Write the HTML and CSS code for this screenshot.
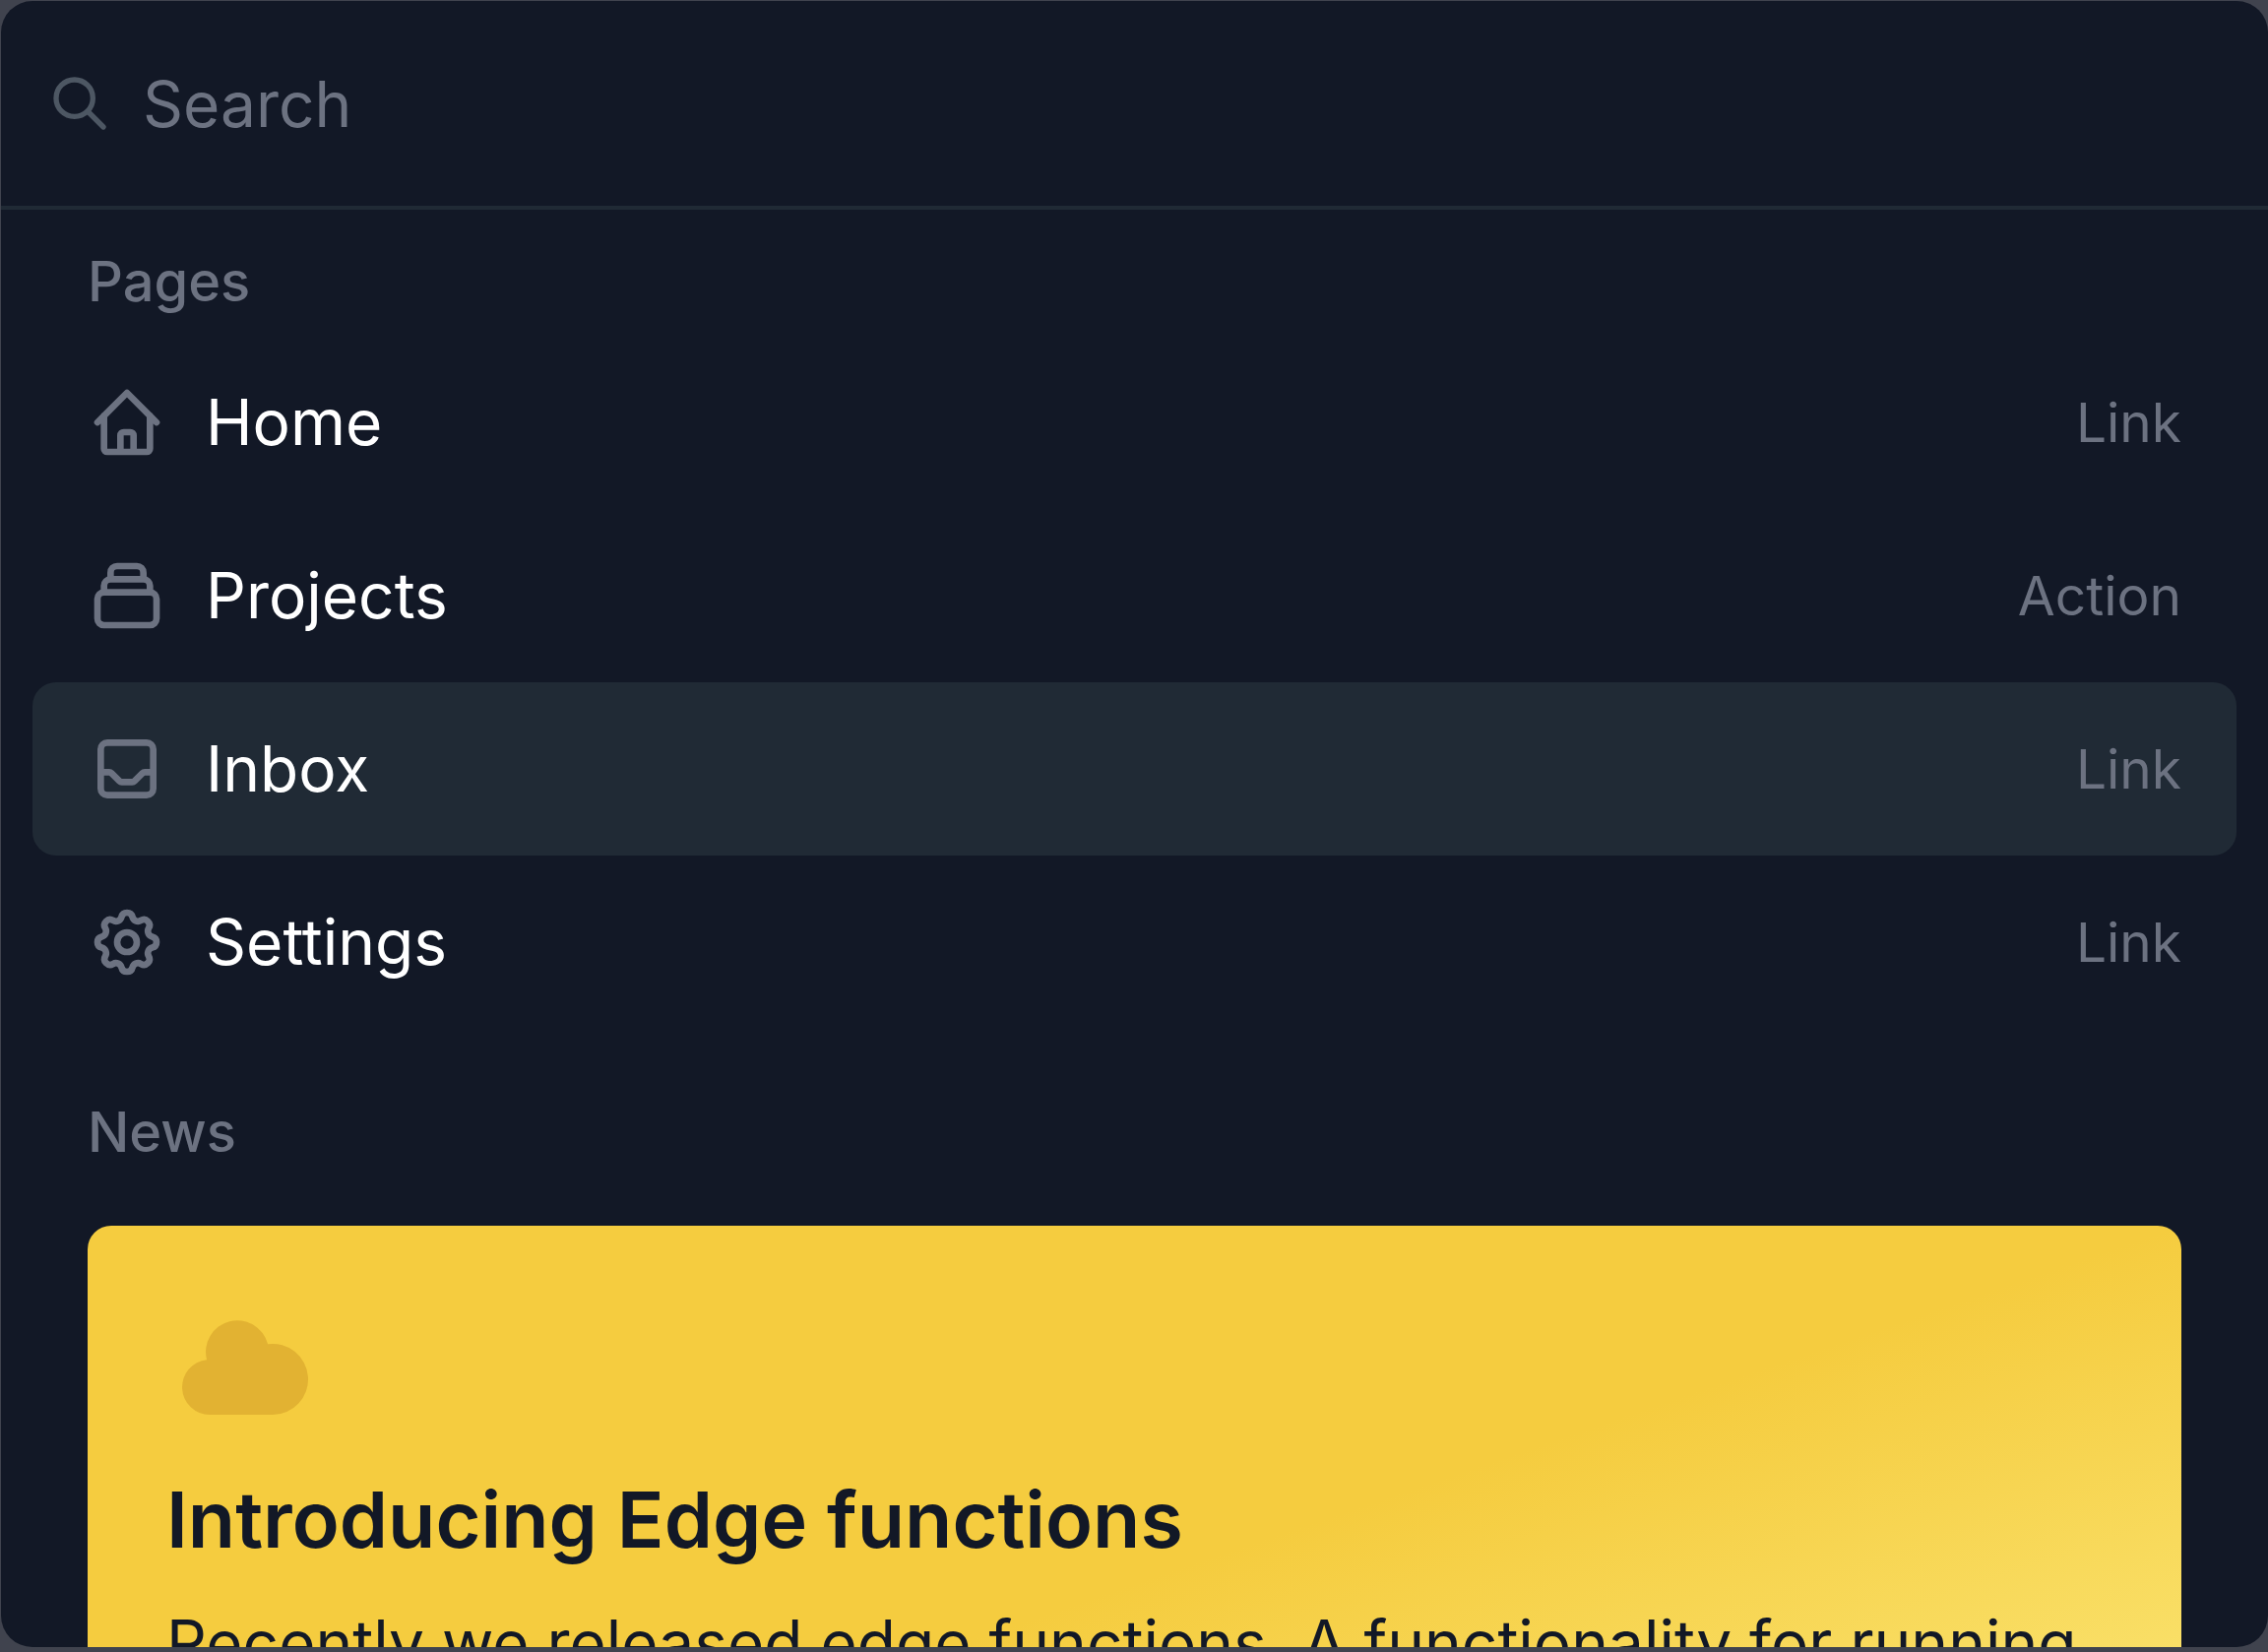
FILE: index.html
```html
<!DOCTYPE html>
<html lang="en">
<head>
  <meta charset="UTF-8">
  <meta name="viewport" content="width=device-width, initial-scale=1.0">
  <title>Command Palette</title>
  <link rel="stylesheet" href="styles.css">
</head>
<body>
  <div class="palette">
    <form class="search-bar" role="search">
      <svg class="search-icon" viewBox="0 0 24 24" aria-hidden="true">
        <path d="M21 21l-6-6m2-5a7 7 0 11-14 0 7 7 0 0114 0z" />
      </svg>
      <input type="text" class="search-input" name="search" placeholder="Search" aria-label="Search" autocomplete="off">
    </form>

    <main class="results">
      <section class="group">
        <h2 class="group-heading">Pages</h2>
        <ul class="items">
          <li>
            <a class="item" href="#home">
              <svg class="item-icon" viewBox="0 0 24 24" aria-hidden="true">
                <path d="M3 12l2-2m0 0l7-7 7 7M5 10v10a1 1 0 001 1h3m10-11l2 2m-2-2v10a1 1 0 01-1 1h-3m-6 0a1 1 0 001-1v-4a1 1 0 011-1h2a1 1 0 011 1v4a1 1 0 001 1m-6 0h6" />
              </svg>
              <span class="item-label">Home</span>
              <span class="item-type">Link</span>
            </a>
          </li>
          <li>
            <button class="item" type="button">
              <svg class="item-icon" viewBox="0 0 24 24" aria-hidden="true">
                <path d="M19 11H5m14 0a2 2 0 012 2v6a2 2 0 01-2 2H5a2 2 0 01-2-2v-6a2 2 0 012-2m14 0V9a2 2 0 00-2-2M5 11V9a2 2 0 012-2m0 0V5a2 2 0 012-2h6a2 2 0 012 2v2M7 7h10" />
              </svg>
              <span class="item-label">Projects</span>
              <span class="item-type">Action</span>
            </button>
          </li>
          <li>
            <a class="item item-active" href="#inbox">
              <svg class="item-icon" viewBox="0 0 24 24" aria-hidden="true">
                <path d="M20 13V6a2 2 0 00-2-2H6a2 2 0 00-2 2v7m16 0v5a2 2 0 01-2 2H6a2 2 0 01-2-2v-5m16 0h-2.586a1 1 0 00-.707.293l-2.414 2.414a1 1 0 01-.707.293h-3.172a1 1 0 01-.707-.293l-2.414-2.414A1 1 0 006.586 13H4" />
              </svg>
              <span class="item-label">Inbox</span>
              <span class="item-type">Link</span>
            </a>
          </li>
          <li>
            <a class="item" href="#settings">
              <svg class="item-icon" viewBox="0 0 24 24" aria-hidden="true">
                <path d="M10.325 4.317c.426-1.756 2.924-1.756 3.35 0a1.724 1.724 0 002.573 1.066c1.543-.94 3.31.826 2.37 2.37a1.724 1.724 0 001.065 2.572c1.756.426 1.756 2.924 0 3.35a1.724 1.724 0 00-1.066 2.573c.94 1.543-.826 3.31-2.37 2.37a1.724 1.724 0 00-2.572 1.065c-.426 1.756-2.924 1.756-3.35 0a1.724 1.724 0 00-2.573-1.066c-1.543.94-3.31-.826-2.37-2.37a1.724 1.724 0 00-1.065-2.572c-1.756-.426-1.756-2.924 0-3.35a1.724 1.724 0 001.066-2.573c-.94-1.543.826-3.31 2.37-2.37.996.608 2.296.07 2.572-1.065z" />
                <path d="M15 12a3 3 0 11-6 0 3 3 0 016 0z" />
              </svg>
              <span class="item-label">Settings</span>
              <span class="item-type">Link</span>
            </a>
          </li>
        </ul>
      </section>

      <section class="group">
        <h2 class="group-heading">News</h2>
        <article class="news-card">
          <svg class="news-icon" viewBox="0 0 20 20" aria-hidden="true">
            <path d="M5.5 16a3.5 3.5 0 01-.369-6.98 4 4 0 117.753-1.977A4.5 4.5 0 1113.5 16h-8z" />
          </svg>
          <h3 class="news-title">Introducing Edge functions</h3>
          <p class="news-text">Recently we released edge functions. A functionality for running</p>
        </article>
      </section>
    </main>
  </div>
</body>
</html>
```
FILE: styles.css
```css
* {
  box-sizing: border-box;
}

body {
  margin: 0;
  height: 100vh;
  padding: 1px 0 5px 1px;
  background-color: #40434e;
  font-family: Inter, "Liberation Sans", sans-serif;
  overflow: hidden;
}

.palette {
  display: flex;
  flex-direction: column;
  height: 100%;
  background-color: #121826;
  border-radius: 32px;
  overflow: hidden;
}

.search-bar {
  display: flex;
  flex-shrink: 0;
  align-items: center;
  gap: 32px;
  padding: 56px 48px;
  border-bottom: 4px solid #202a35;
}

.search-icon {
  flex-shrink: 0;
  width: 64px;
  height: 64px;
  fill: none;
  stroke: #4d5763;
  stroke-width: 2;
  stroke-linecap: round;
  stroke-linejoin: round;
}

.search-input {
  flex: 1;
  min-width: 0;
  height: 96px;
  padding: 0;
  border: none;
  outline: none;
  background: transparent;
  color: #fff;
  font-family: inherit;
  font-size: 64px;
}

.search-input::placeholder {
  color: #6c7281;
  opacity: 1;
}

.results {
  flex: 1;
  min-height: 0;
  padding: 0 32px;
  overflow: hidden;
}

.group {
  padding-bottom: 32px;
}

.group-heading {
  margin: 0;
  padding: 33px 56px 15px;
  color: #6c7281;
  font-size: 56px;
  font-weight: 500;
  line-height: 80px;
}

.items {
  margin: 0;
  padding: 0;
  list-style: none;
}

.item {
  display: flex;
  align-items: center;
  gap: 40px;
  width: 100%;
  padding: 40px 56px;
  border: none;
  border-radius: 24px;
  background: transparent;
  color: #fff;
  font-family: inherit;
  font-size: 64px;
  line-height: 96px;
  text-align: left;
  text-decoration: none;
  cursor: pointer;
}

.item:hover,
.item-active {
  background-color: #202a35;
}

.item-icon {
  flex-shrink: 0;
  width: 80px;
  height: 80px;
  fill: none;
  stroke: #6c7281;
  stroke-width: 2;
  stroke-linecap: round;
  stroke-linejoin: round;
}

.item-label {
  flex: 1;
}

.item-type {
  color: #6c7281;
  font-size: 55px;
}

.news-card {
  min-height: 728px;
  margin: 40px 56px 0;
  padding: 64px 80px;
  border-radius: 24px;
  background: linear-gradient(to bottom right, #f5cc3f 50%, #fcec82);
  color: #121826;
}

.news-icon {
  display: block;
  width: 160px;
  height: 160px;
  fill: #e2b232;
}

.news-title {
  margin: 18px 0 22px;
  font-size: 79px;
  font-weight: 600;
  line-height: 112px;
}

.news-text {
  margin: 0;
  font-size: 64px;
  line-height: 96px;
}
```
